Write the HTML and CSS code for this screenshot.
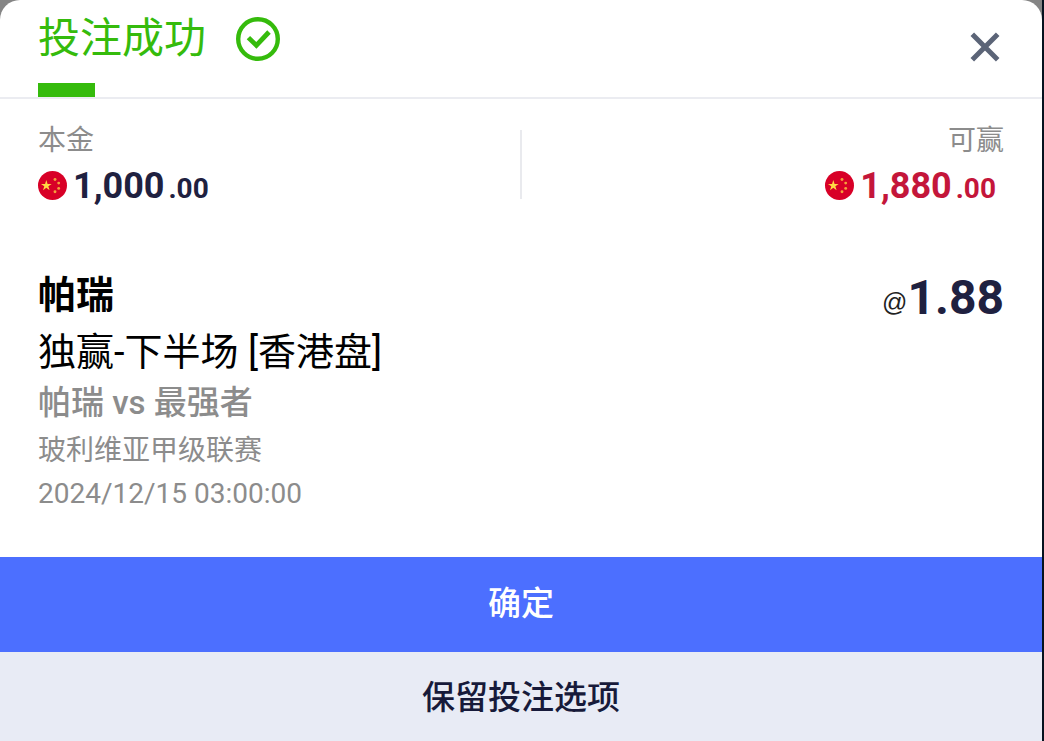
FILE: index.html
```
<!DOCTYPE html>
<html lang="zh-CN">
<head>
<meta charset="utf-8">
<meta name="viewport" content="width=device-width, initial-scale=1">
<title>投注成功</title>
<link rel="stylesheet" href="styles.css">
</head>
<body>
<svg class="defs" aria-hidden="true">
  <symbol id="flag-cn" viewBox="0 0 30 30">
    <circle cx="15" cy="15" r="15" fill="#d80027"/>
    <path fill="#ffda44" d="M8.6 9.4l1.3 4h4.2l-3.4 2.4 1.3 4-3.4-2.4-3.4 2.4 1.3-4-3.4-2.4h4.2z"/>
    <g fill="#f5a03c">
      <circle cx="17.6" cy="8.8" r="1.5"/><circle cx="21.4" cy="12.5" r="1.5"/>
      <circle cx="21.4" cy="18" r="1.5"/><circle cx="17.6" cy="21.4" r="1.5"/>
    </g>
  </symbol>
</svg>
<div class="backdrop">
  <main class="sheet">
    <header class="header">
      <div class="heading">
        <h1 class="title">投注成功</h1>
        <svg class="success" viewBox="0 0 44 44" fill="none" stroke="#35bb0c" aria-hidden="true">
          <circle cx="22" cy="22" r="19.8" stroke-width="4.4"/>
          <path d="M12.4 20.6l8 7.8L33 15" stroke-width="4.8"/>
        </svg>
      </div>
      <button class="close" type="button" aria-label="关闭">
        <svg class="close-icon" viewBox="0 0 30 30" fill="none" stroke="#5b6477" stroke-width="5" aria-hidden="true">
          <path d="M2.3 2.3l25.4 25.4M27.7 2.3L2.3 27.7"/>
        </svg>
      </button>
    </header>
    <section class="amounts">
      <div class="amount">
        <span class="label">本金</span>
        <span class="money"><svg class="flag" aria-hidden="true"><use href="#flag-cn"/></svg><span>1,000<span class="cents">.00</span></span></span>
      </div>
      <div class="amount win">
        <span class="label">可赢</span>
        <span class="money"><svg class="flag" aria-hidden="true"><use href="#flag-cn"/></svg><span>1,880<span class="cents">.00</span></span></span>
      </div>
    </section>
    <section class="bet">
      <div class="details">
        <h2 class="pick">帕瑞</h2>
        <p class="market">独赢-下半场 [香港盘]</p>
        <p class="match">帕瑞 vs 最强者</p>
        <p class="league">玻利维亚甲级联赛</p>
        <p class="time">2024/12/15 03:00:00</p>
      </div>
      <div class="odds"><span class="at">@</span>1.88</div>
    </section>
    <footer class="actions">
      <button class="action confirm" type="button">确定</button>
      <button class="action keep" type="button">保留投注选项</button>
    </footer>
  </main>
</div>
</body>
</html>
```
FILE: styles.css
```
* { box-sizing: border-box; }

body {
  margin: 0;
  background: #06121f;
  font-family: Roboto, "Noto Sans CJK SC", sans-serif;
}

h1, h2, p { margin: 0; font-weight: 400; }

button {
  border: 0;
  padding: 0;
  background: none;
  font-family: inherit;
  cursor: pointer;
}

.defs { position: absolute; width: 0; height: 0; }

.backdrop {
  min-height: 100vh;
  margin-right: 2px;
  display: flex;
  background: #858585;
}

.sheet {
  flex: 1;
  display: flex;
  flex-direction: column;
  background: #fff;
  border-radius: 20px 20px 0 0;
  overflow: hidden;
}

.header {
  display: flex;
  justify-content: space-between;
  align-items: flex-start;
  padding: 6px 40px 0 38px;
  border-bottom: 2px solid #ebecf1;
}

.heading {
  display: flex;
  align-items: center;
  gap: 30px;
  padding-bottom: 25px;
  background: linear-gradient(#35bb0c, #35bb0c) left bottom / 57px 14px no-repeat;
}

.title {
  font-size: 42px;
  line-height: 66px;
  color: #35bb0c;
}

.success { width: 44px; height: 44px; }

.close {
  display: flex;
  padding: 26px 2px;
}

.close-icon { width: 30px; height: 30px; }

.amounts {
  display: grid;
  grid-template-columns: 1fr 1fr;
  padding: 22px 38px 54px;
  background: linear-gradient(#e9eaee, #e9eaee) center 31px / 2px 69px no-repeat;
}

.amount {
  display: flex;
  flex-direction: column;
  align-items: flex-start;
  color: #1f2140;
}

.win { align-items: flex-end; color: #c4163a; }

.label {
  font-size: 28px;
  line-height: 40px;
  color: #8c8c8c;
}

.money {
  display: flex;
  align-items: flex-start;
  gap: 6px;
  font-size: 36px;
  line-height: 50px;
  font-weight: 700;
}

.win .money { padding-right: 8px; }

.flag { width: 29px; height: 29px; margin-top: 10px; }

.cents { padding-left: 4px; font-size: 28px; }

.bet {
  flex: 1;
  display: flex;
  justify-content: space-between;
  align-items: flex-start;
  padding: 0 38px 46px;
}

.pick {
  font-size: 38px;
  line-height: 54px;
  font-weight: 700;
  color: #000;
}

.market {
  font-size: 38px;
  line-height: 60px;
  color: #000;
}

.match {
  font-size: 33px;
  line-height: 42px;
  font-weight: 500;
  color: #8c8c8c;
}

.league {
  font-size: 28px;
  line-height: 54px;
  color: #8c8c8c;
}

.time {
  font-size: 28px;
  line-height: 32px;
  color: #8c8c8c;
}

.odds {
  display: flex;
  align-items: flex-start;
  font-size: 48px;
  line-height: 60px;
  font-weight: 700;
  color: #1f2140;
}

.at {
  padding-top: 4px;
  font-family: "Liberation Sans", sans-serif;
  font-size: 25px;
  font-weight: 400;
  color: #222;
}

.actions { display: flex; flex-direction: column; }

.action {
  font-size: 33px;
  font-weight: 500;
}

.confirm { height: 95px; padding-bottom: 8px; background: #4c6fff; color: #fff; }

.keep { height: 89px; padding-bottom: 4px; background: #e8ebf5; color: #171a3a; }
```
